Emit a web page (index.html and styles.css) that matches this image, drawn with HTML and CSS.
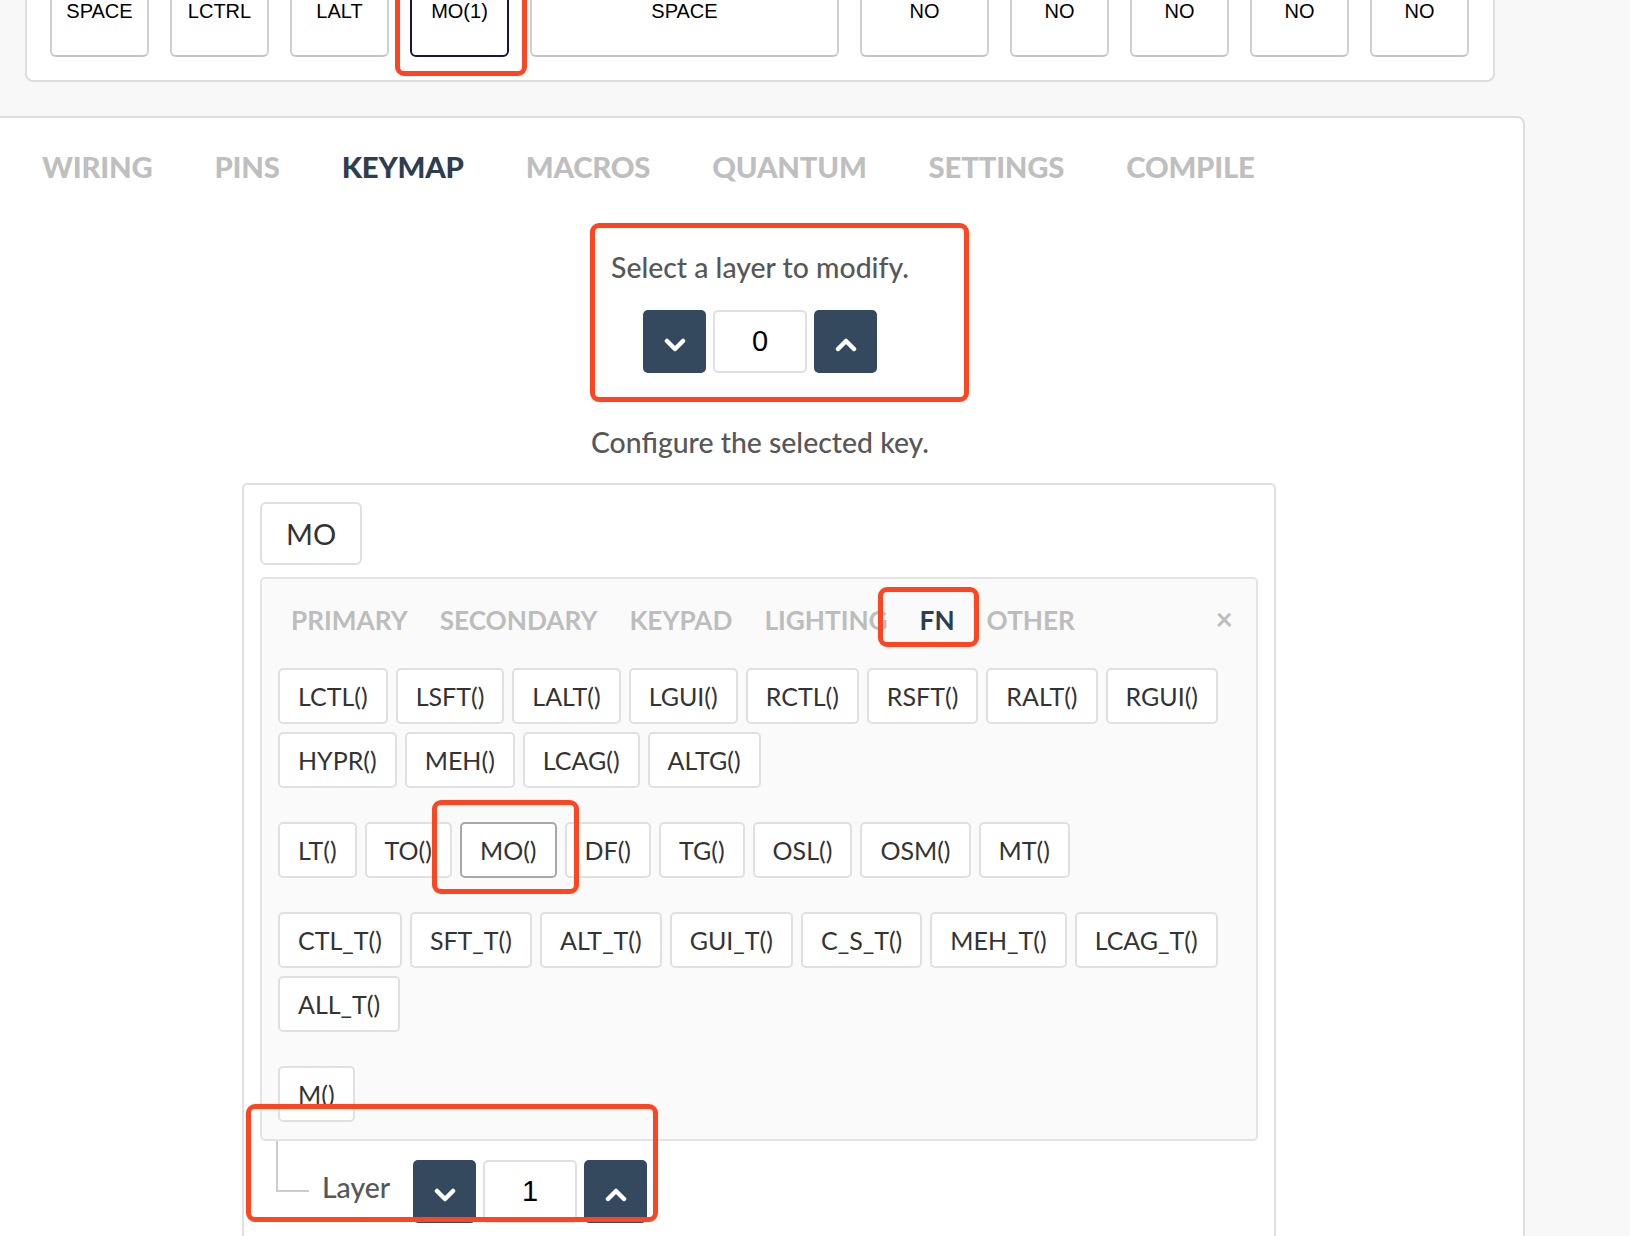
FILE: index.html
```html
<!DOCTYPE html>
<html lang="en">
<head>
<meta charset="utf-8">
<title>Keymap</title>
<link rel="stylesheet" href="styles.css">
</head>
<body>
<div class="page">
  <div class="kb-card">
    <div class="keys">
      <div class="key-slot u1"><div class="key">SPACE</div></div>
      <div class="key-slot u1"><div class="key">LCTRL</div></div>
      <div class="key-slot u1"><div class="key">LALT</div></div>
      <div class="key-slot u1"><div class="key selected">MO(1)</div></div>
      <div class="key-slot u275"><div class="key">SPACE</div></div>
      <div class="key-slot u125"><div class="key">NO</div></div>
      <div class="key-slot u1"><div class="key">NO</div></div>
      <div class="key-slot u1"><div class="key">NO</div></div>
      <div class="key-slot u1"><div class="key">NO</div></div>
      <div class="key-slot u1 last"><div class="key">NO</div></div>
    </div>
  </div>

  <div class="main-card">
    <nav class="tabs">
      <span class="tab">WIRING</span>
      <span class="tab">PINS</span>
      <span class="tab active">KEYMAP</span>
      <span class="tab">MACROS</span>
      <span class="tab">QUANTUM</span>
      <span class="tab">SETTINGS</span>
      <span class="tab">COMPILE</span>
    </nav>

    <section class="layer-select">
      <p class="label">Select a layer to modify.</p>
      <div class="stepper">
        <button class="step-btn down"><svg width="22" height="14" viewBox="0 0 22 14"><path d="M3 3 L11 11 L19 3" fill="none" stroke="#fff" stroke-width="4.5" stroke-linecap="round" stroke-linejoin="round"/></svg></button>
        <div class="step-value">0</div>
        <button class="step-btn up"><svg width="22" height="14" viewBox="0 0 22 14"><path d="M3 11 L11 3 L19 11" fill="none" stroke="#fff" stroke-width="4.5" stroke-linecap="round" stroke-linejoin="round"/></svg></button>
      </div>
    </section>

    <p class="label configure">Configure the selected key.</p>

    <div class="key-config">
      <div class="current-key">MO</div>
      <div class="picker">
        <div class="picker-tabs">
          <span class="ptab">PRIMARY</span>
          <span class="ptab">SECONDARY</span>
          <span class="ptab">KEYPAD</span>
          <span class="ptab">LIGHTING</span>
          <span class="ptab active">FN</span>
          <span class="ptab">OTHER</span>
          <span class="close">&#215;</span>
        </div>
        <div class="group">
          <span class="kbtn">LCTL()</span><span class="kbtn">LSFT()</span><span class="kbtn">LALT()</span><span class="kbtn">LGUI()</span><span class="kbtn">RCTL()</span><span class="kbtn">RSFT()</span><span class="kbtn">RALT()</span><span class="kbtn">RGUI()</span>
          <span class="kbtn">HYPR()</span><span class="kbtn">MEH()</span><span class="kbtn">LCAG()</span><span class="kbtn">ALTG()</span>
        </div>
        <div class="group">
          <span class="kbtn">LT()</span><span class="kbtn">TO()</span><span class="kbtn selected">MO()</span><span class="kbtn">DF()</span><span class="kbtn">TG()</span><span class="kbtn">OSL()</span><span class="kbtn">OSM()</span><span class="kbtn">MT()</span>
        </div>
        <div class="group">
          <span class="kbtn">CTL_T()</span><span class="kbtn">SFT_T()</span><span class="kbtn">ALT_T()</span><span class="kbtn">GUI_T()</span><span class="kbtn">C_S_T()</span><span class="kbtn">MEH_T()</span><span class="kbtn">LCAG_T()</span>
          <span class="kbtn">ALL_T()</span>
        </div>
        <div class="group">
          <span class="kbtn">M()</span>
        </div>
      </div>
      <div class="layer-row">
        <div class="tree"></div>
        <span class="layer-label">Layer</span>
        <div class="stepper">
          <button class="step-btn down"><svg width="22" height="14" viewBox="0 0 22 14"><path d="M3 3 L11 11 L19 3" fill="none" stroke="#fff" stroke-width="4.5" stroke-linecap="round" stroke-linejoin="round"/></svg></button>
          <div class="step-value">1</div>
          <button class="step-btn up"><svg width="22" height="14" viewBox="0 0 22 14"><path d="M3 11 L11 3 L19 11" fill="none" stroke="#fff" stroke-width="4.5" stroke-linecap="round" stroke-linejoin="round"/></svg></button>
        </div>
      </div>
    </div>
  </div>

  <div class="mark mark-key"></div>
  <div class="mark mark-layer"></div>
  <div class="mark mark-fn"></div>
  <div class="mark mark-mo"></div>
  <div class="mark mark-param"></div>
</div>
</body>
</html>
```

FILE: styles.css
```css
* { box-sizing: border-box; }

html, body {
  margin: 0;
  padding: 0;
  background: #f8f8f8;
  overflow: hidden;
  height: 1236px;
}

.page {
  position: relative;
  display: flow-root;
  width: 1630px;
  height: 1236px;
  font-family: Lato, "Open Sans", sans-serif;
}

/* keyboard card */
.kb-card {
  margin: -55px 0 0 25px;
  width: 1470px;
  background: #fff;
  border: 2px solid #dedede;
  border-radius: 0 0 8px 8px;
  padding: 20px 24px 23px 23px;
}

.keys {
  display: flex;
}

.key-slot { padding-right: 21px; }
.key-slot.u1 { width: 120px; }
.key-slot.u125 { width: 150px; }
.key-slot.u275 { width: 330px; }
.key-slot.last { width: 99px; padding-right: 0; }

.key {
  height: 90px;
  background: #fff;
  border: 2px solid #cfcfcf;
  border-bottom-color: #c4c4c4;
  border-radius: 6px;
  padding-top: 30px;
  font-family: "Liberation Sans", Arial, sans-serif;
  font-size: 20px;
  line-height: 24px;
  color: #000;
  text-align: center;
}

.key.selected {
  border-color: #15154a;
}

/* main card */
.main-card {
  margin: 34px 0 0 -4px;
  width: 1529px;
  height: 1200px;
  background: #fff;
  border: 2px solid #dedede;
  border-top-right-radius: 8px;
  padding: 29px 0 0 44px;
}

.tabs {
  display: flex;
  gap: 62px;
  height: 40px;
  align-items: center;
}

.tab {
  font-size: 29.3px;
  font-weight: 900;
  color: #bfbfbf;
  line-height: 40px;
  letter-spacing: -0.2px;
}

.tab.active { color: #2c3e50; }

.layer-select {
  margin: 62px 0 0 -45px;
  display: flex;
  flex-direction: column;
  align-items: center;
}

.label {
  margin: 0;
  font-size: 28.4px;
  font-weight: 500;
  line-height: 36px;
  color: #575757;
  text-align: center;
}

.layer-select .stepper { margin-top: 25px; }

.stepper {
  display: flex;
  gap: 7px;
}

.step-btn {
  width: 63px;
  height: 63px;
  border: none;
  border-radius: 5px;
  background: #34495e;
  padding: 6px 0 0 0;
  display: flex;
  align-items: center;
  justify-content: center;
}

.step-value {
  width: 94px;
  height: 63px;
  border: 2px solid #e0e0e0;
  border-radius: 5px;
  background: #fff;
  font-family: "Liberation Sans", Arial, sans-serif;
  font-size: 29px;
  line-height: 59px;
  text-align: center;
  color: #000;
}

.configure {
  margin: 51px 0 0 -45px;
}

/* key configuration */
.key-config {
  margin: 23px 0 0 200px;
  width: 1034px;
  height: 800px;
  border: 2px solid #e0e0e0;
  border-radius: 5px;
  padding: 17px 16px;
}

.current-key {
  display: inline-block;
  height: 63px;
  padding: 0 24px;
  border: 2px solid #e0e0e0;
  border-radius: 6px;
  font-size: 29px;
  line-height: 59px;
  color: #333;
  background: #fff;
}

.picker {
  margin-top: 12px;
  background: #fafafa;
  border: 2px solid #e3e3e3;
  border-radius: 5px;
  padding: 21px 16px 17px;
}

.picker-tabs {
  display: flex;
  align-items: center;
  height: 40px;
  margin-left: -3px;
  margin-bottom: 28px;
}

.ptab {
  padding: 0 16px;
  font-size: 26.2px;
  font-weight: 700;
  color: #bdbdbd;
  line-height: 40px;
}

.ptab.active { color: #2c3e50; }

.close {
  margin-left: auto;
  margin-right: 7px;
  font-size: 30px;
  font-weight: 700;
  color: #bdbdbd;
  line-height: 30px;
  margin-top: -5px;
}

.group {
  display: flex;
  flex-wrap: wrap;
  gap: 8px;
}

.group + .group { margin-top: 34px; }

.kbtn {
  height: 56px;
  padding: 0 18px;
  border: 2px solid #e0e0e0;
  border-radius: 5px;
  background: #fff;
  font-size: 25px;
  line-height: 52px;
  color: #333;
}

.kbtn.selected { border-color: #a8a8a8; }

.layer-row {
  display: flex;
  align-items: flex-start;
}

.tree {
  margin-left: 16px;
  width: 33px;
  height: 51px;
  border-left: 2px solid #cccccc;
  border-bottom: 2px solid #cccccc;
}

.layer-label {
  margin: 28px 0 0 13px;
  font-size: 28.4px;
  font-weight: 500;
  line-height: 36px;
  color: #575757;
}

.layer-row .stepper {
  margin: 19px 0 0 23px;
}

/* annotation overlays */
.mark {
  position: absolute;
  border: 5px solid #ff4422;
  border-radius: 9px;
}

.mark-key { left: 395px; top: -20px; width: 132px; height: 96px; }
.mark-layer { left: 590px; top: 223px; width: 379px; height: 179px; }
.mark-fn { left: 878px; top: 587px; width: 101px; height: 60px; }
.mark-mo { left: 432px; top: 800px; width: 147px; height: 94px; }
.mark-param { left: 246px; top: 1104px; width: 412px; height: 118px; }
```
